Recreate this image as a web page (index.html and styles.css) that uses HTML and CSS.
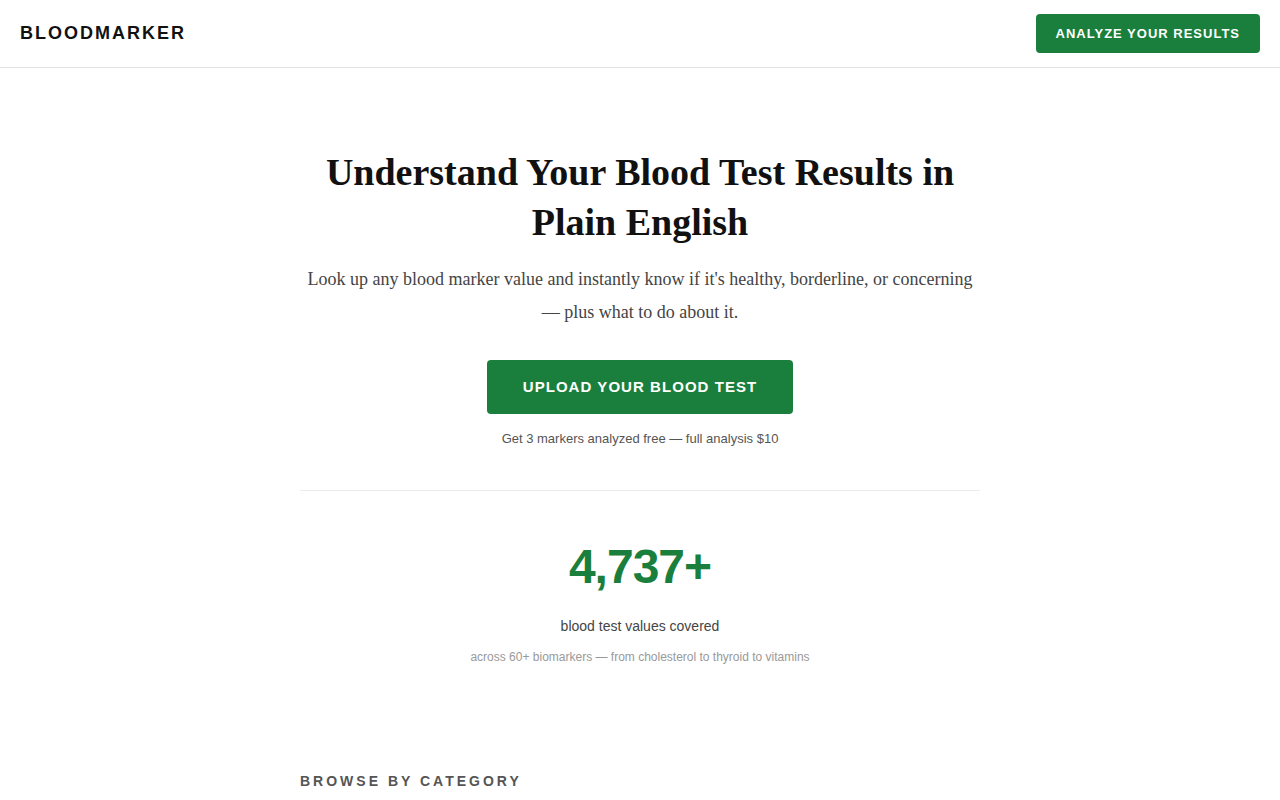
FILE: index.html
```html
<!DOCTYPE html>
<html lang="en">
<head>
<meta charset="utf-8">
<title>BloodMarker</title>
<link rel="stylesheet" href="styles.css">
</head>
<body>
<header class="site-header">
  <div class="logo">BLOODMARKER</div>
  <a class="btn btn-small" href="#">ANALYZE YOUR RESULTS</a>
</header>
<main class="container">
  <section class="hero">
    <h1>Understand Your Blood Test Results in Plain English</h1>
    <p class="lead">Look up any blood marker value and instantly know if it's healthy, borderline, or concerning — plus what to do about it.</p>
    <a class="btn btn-large" href="#">UPLOAD YOUR BLOOD TEST</a>
    <p class="note">Get 3 markers analyzed free — full analysis $10</p>
  </section>
  <section class="stats">
    <div class="stat-number">4,737+</div>
    <div class="stat-label">blood test values covered</div>
    <div class="stat-sub">across 60+ biomarkers — from cholesterol to thyroid to vitamins</div>
  </section>
  <section class="browse">
    <h2 class="section-title">BROWSE BY CATEGORY</h2>
  </section>
</main>
</body>
</html>
```

FILE: styles.css
```css
* { box-sizing: border-box; }
body {
  margin: 0;
  font-family: "Liberation Sans", Arial, sans-serif;
  color: #111;
  background: #fff;
}
.site-header {
  display: flex;
  justify-content: space-between;
  align-items: center;
  height: 68px;
  padding: 0 20px;
  border-bottom: 1px solid #e2e2e2;
}
.logo {
  font-size: 18px;
  font-weight: 700;
  letter-spacing: 2px;
  color: #111;
}
.btn {
  display: inline-block;
  background: #1a7f3c;
  color: #fff;
  text-decoration: none;
  font-weight: 700;
  border-radius: 4px;
  white-space: nowrap;
  font-family: "Liberation Sans", Arial, sans-serif;
}
.btn-small {
  font-size: 13px;
  letter-spacing: 1px;
  padding: 12px 20px;
  line-height: 15px;
}
.container {
  width: 680px;
  margin: 0 auto;
}
.hero {
  text-align: center;
  padding-top: 79px;
  padding-bottom: 44px;
  border-bottom: 1px solid #ececec;
}
.hero h1 {
  font-family: "Liberation Serif", "Times New Roman", serif;
  font-size: 38px;
  line-height: 50px;
  font-weight: 700;
  margin: 0 0 16px;
  padding: 0 20px;
}
.lead {
  font-family: "Liberation Serif", "Times New Roman", serif;
  font-size: 18px;
  line-height: 33px;
  color: #444;
  margin: 0 0 31px;
}
.btn-large {
  font-size: 15px;
  letter-spacing: 1.05px;
  padding: 19px 36px;
  line-height: 16px;
}
.note {
  font-size: 13px;
  color: #555;
  margin: 17px 0 0;
  line-height: 15px;
}
.stats {
  text-align: center;
  padding-top: 48px;
  padding-bottom: 109px;
}
.stat-number {
  font-size: 48px;
  font-weight: 700;
  color: #1a7f3c;
  line-height: 56px;
  letter-spacing: -1px;
}
.stat-label {
  font-size: 14px;
  color: #444;
  margin-top: 23px;
  line-height: 16px;
}
.stat-sub {
  font-size: 12px;
  color: #999;
  margin-top: 16px;
  line-height: 14px;
}
.section-title {
  font-size: 14px;
  font-weight: 700;
  letter-spacing: 3px;
  color: #555;
  margin: 0;
  line-height: 16px;
}
```
